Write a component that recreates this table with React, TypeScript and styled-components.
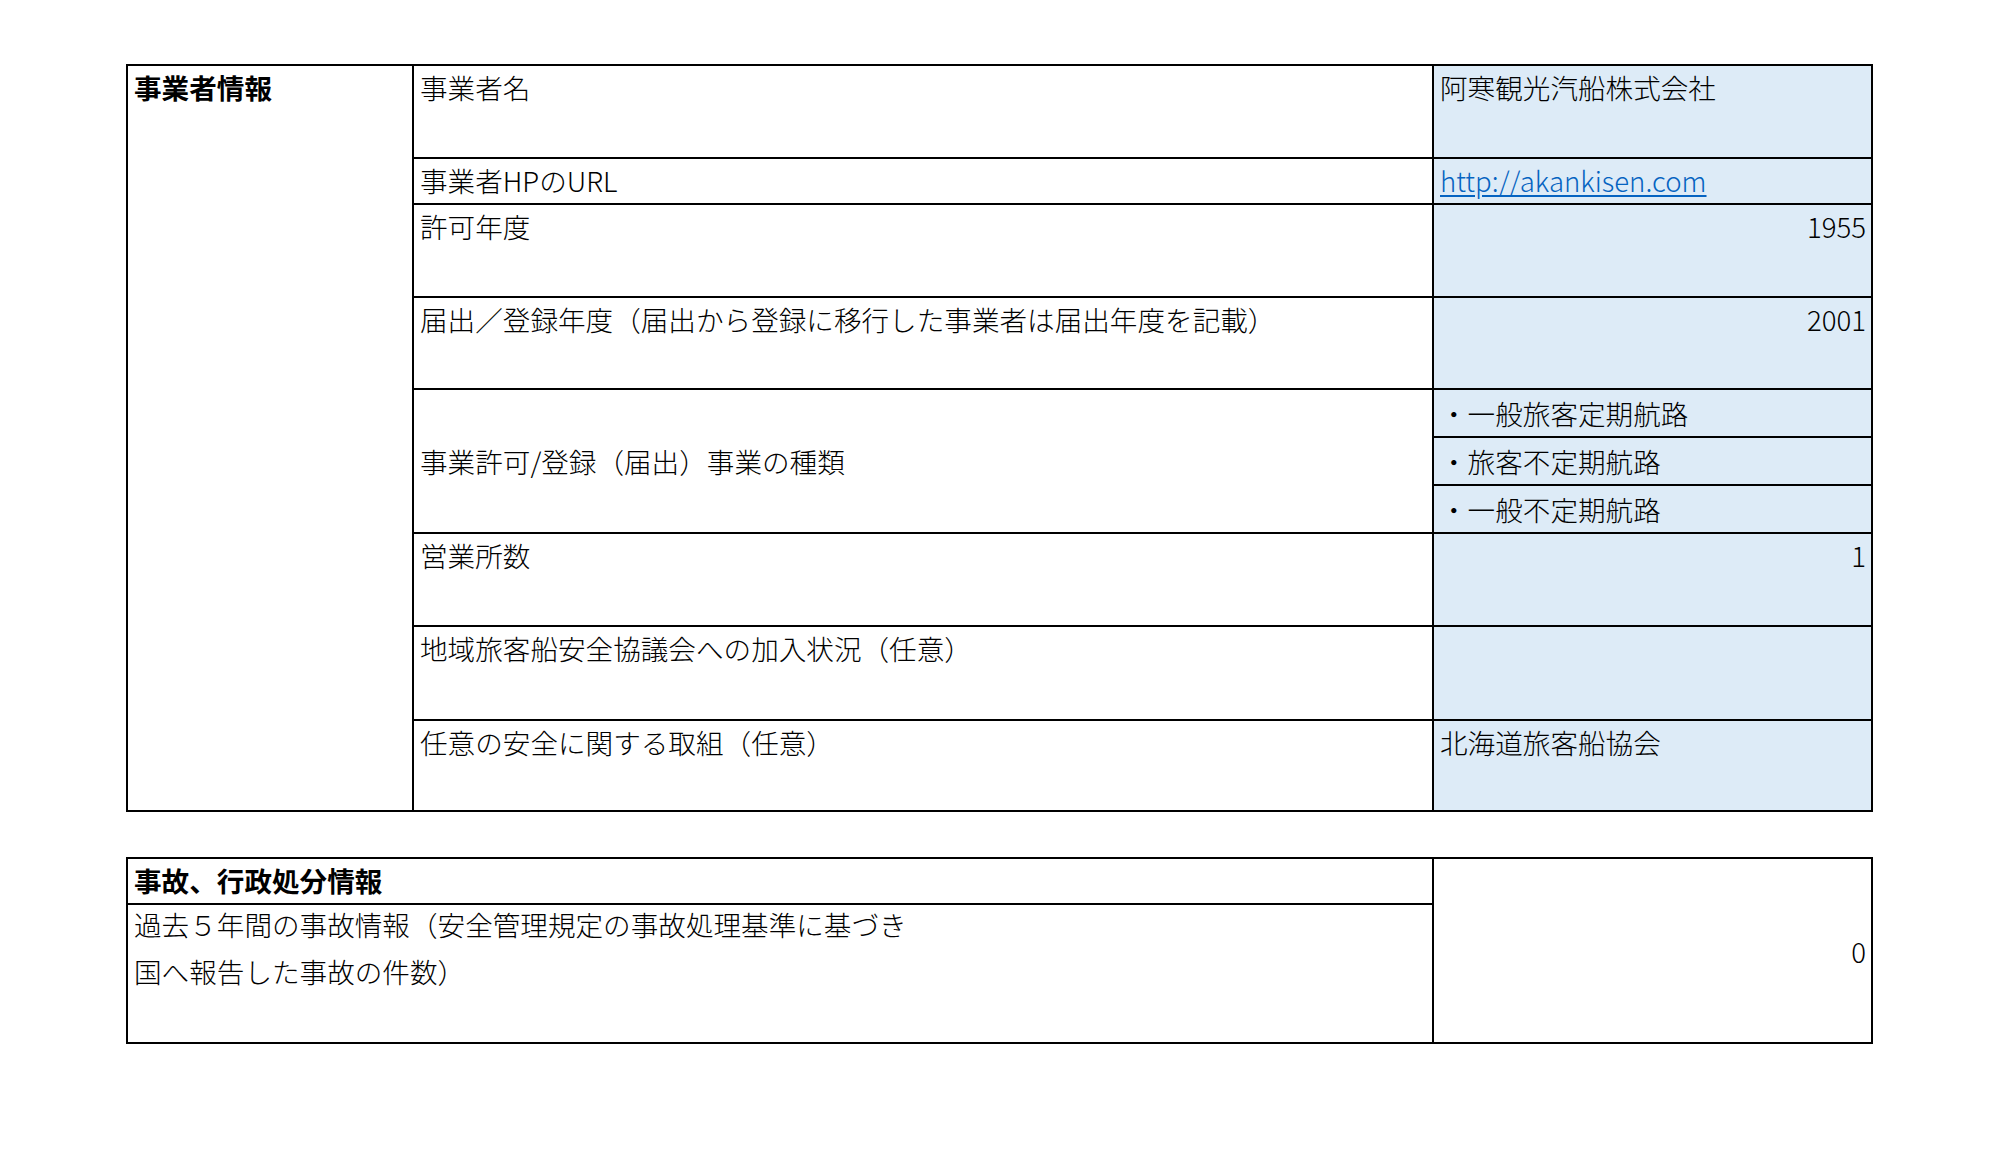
import React from 'react'
import styled, { createGlobalStyle } from 'styled-components'

const GlobalStyle = createGlobalStyle`
  body {
    margin: 0;
    background: #fff;
    color: #000;
    font-family: "Noto Sans CJK JP", "Noto Sans", sans-serif;
  }
`

const Page = styled.main`
  display: flex;
  flex-direction: column;
  gap: 45px;
  padding: 64px 0 0 126px;
`

const Sheet = styled.table`
  border-collapse: collapse;
  table-layout: fixed;
  width: 1745px;
`

const Row = styled.tr<{ $h: number }>`
  height: ${p => p.$h}px;
`

const Cell = styled.td<{ $blue?: boolean; $right?: boolean; $middle?: boolean; $bold?: boolean }>`
  border: 2px solid #000;
  padding: 0 5px 0 6px;
  font-size: 27.6px;
  font-weight: ${p => (p.$bold ? 700 : 300)};
  line-height: 42px;
  vertical-align: ${p => (p.$middle ? 'middle' : 'top')};
  text-align: ${p => (p.$right ? 'right' : 'left')};
  background: ${p => (p.$blue ? '#ddebf7' : '#fff')};
  white-space: nowrap;
  overflow: hidden;
`

const Link = styled.a`
  color: #0563c1;
  text-decoration: underline;
  text-underline-offset: 3px;
`

const Lines = styled.div`
  line-height: 47px;
  margin-top: -4px;
`

type Item = { label: string; value?: React.ReactNode; h: number; right?: boolean }

const info: Item[] = [
  { label: '事業者名', value: '阿寒観光汽船株式会社', h: 93 },
  { label: '事業者HPのURL', value: <Link href="#">http://akankisen.com</Link>, h: 46 },
  { label: '許可年度', value: '1955', h: 93, right: true },
  { label: '届出／登録年度（届出から登録に移行した事業者は届出年度を記載）', value: '2001', h: 92, right: true },
]

const infoAfter: Item[] = [
  { label: '営業所数', value: '1', h: 93, right: true },
  { label: '地域旅客船安全協議会への加入状況（任意）', value: '', h: 94 },
  { label: '任意の安全に関する取組（任意）', value: '北海道旅客船協会', h: 91 },
]

const kinds = ['・一般旅客定期航路', '・旅客不定期航路', '・一般不定期航路']

export default function App() {
  return (
    <>
      <GlobalStyle />
      <Page>
        <Sheet>
          <colgroup>
            <col style={{ width: 286 }} />
            <col style={{ width: 1020 }} />
            <col style={{ width: 439 }} />
          </colgroup>
          <tbody>
            {info.map((r, i) => (
              <Row $h={r.h} key={r.label}>
                {i === 0 && (
                  <Cell rowSpan={info.length + kinds.length + infoAfter.length} $bold>
                    事業者情報
                  </Cell>
                )}
                <Cell>{r.label}</Cell>
                <Cell $blue $right={r.right}>{r.value}</Cell>
              </Row>
            ))}
            {kinds.map((k, i) => (
              <Row $h={48} key={k}>
                {i === 0 && (
                  <Cell rowSpan={kinds.length} $middle>
                    事業許可/登録（届出）事業の種類
                  </Cell>
                )}
                <Cell $blue $middle>{k}</Cell>
              </Row>
            ))}
            {infoAfter.map(r => (
              <Row $h={r.h} key={r.label}>
                <Cell>{r.label}</Cell>
                <Cell $blue $right={r.right}>{r.value}</Cell>
              </Row>
            ))}
          </tbody>
        </Sheet>

        <Sheet>
          <colgroup>
            <col style={{ width: 1306 }} />
            <col style={{ width: 439 }} />
          </colgroup>
          <tbody>
            <Row $h={46}>
              <Cell $bold>事故、行政処分情報</Cell>
              <Cell rowSpan={2} $right $middle>0</Cell>
            </Row>
            <Row $h={139}>
              <Cell>
                <Lines>
                  過去５年間の事故情報（安全管理規定の事故処理基準に基づき
                  <br />
                  国へ報告した事故の件数）
                </Lines>
              </Cell>
            </Row>
          </tbody>
        </Sheet>
      </Page>
    </>
  )
}
